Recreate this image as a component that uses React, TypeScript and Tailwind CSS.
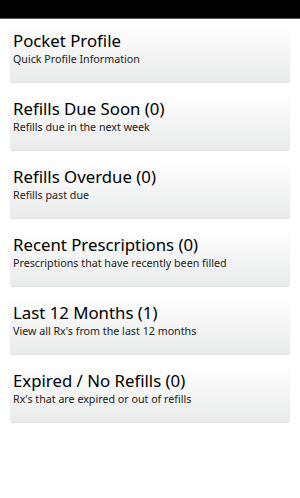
const items = [
  { title: "Pocket Profile", sub: "Quick Profile Information" },
  { title: "Refills Due Soon (0)", sub: "Refills due in the next week" },
  { title: "Refills Overdue (0)", sub: "Refills past due" },
  { title: "Recent Prescriptions (0)", sub: "Prescriptions that have recently been filled" },
  { title: "Last 12 Months (1)", sub: "View all Rx's from the last 12 months" },
  { title: "Expired / No Refills (0)", sub: "Rx's that are expired or out of refills" },
];

export default function App() {
  return (
    <div className="w-[300px] h-[498px] bg-white font-['Noto_Sans',sans-serif] text-black overflow-hidden">
      <div className="h-[19px] bg-black border-b border-[#5a5a5a]" />
      <div className="flex flex-col gap-[12px] px-[10px] pt-[7px]">
        {items.map((item) => (
          <div
            key={item.title}
            className="h-[56px] rounded-[2px] bg-gradient-to-b from-white to-[#e9eaea] shadow-[0_1px_1px_rgba(0,0,0,0.12)] px-[3px] pt-[3px]"
          >
            <div className="text-[16.8px] leading-[23px]">{item.title}</div>
            <div className="text-[10.7px] leading-[14px] text-[#222]">{item.sub}</div>
          </div>
        ))}
      </div>
    </div>
  );
}
